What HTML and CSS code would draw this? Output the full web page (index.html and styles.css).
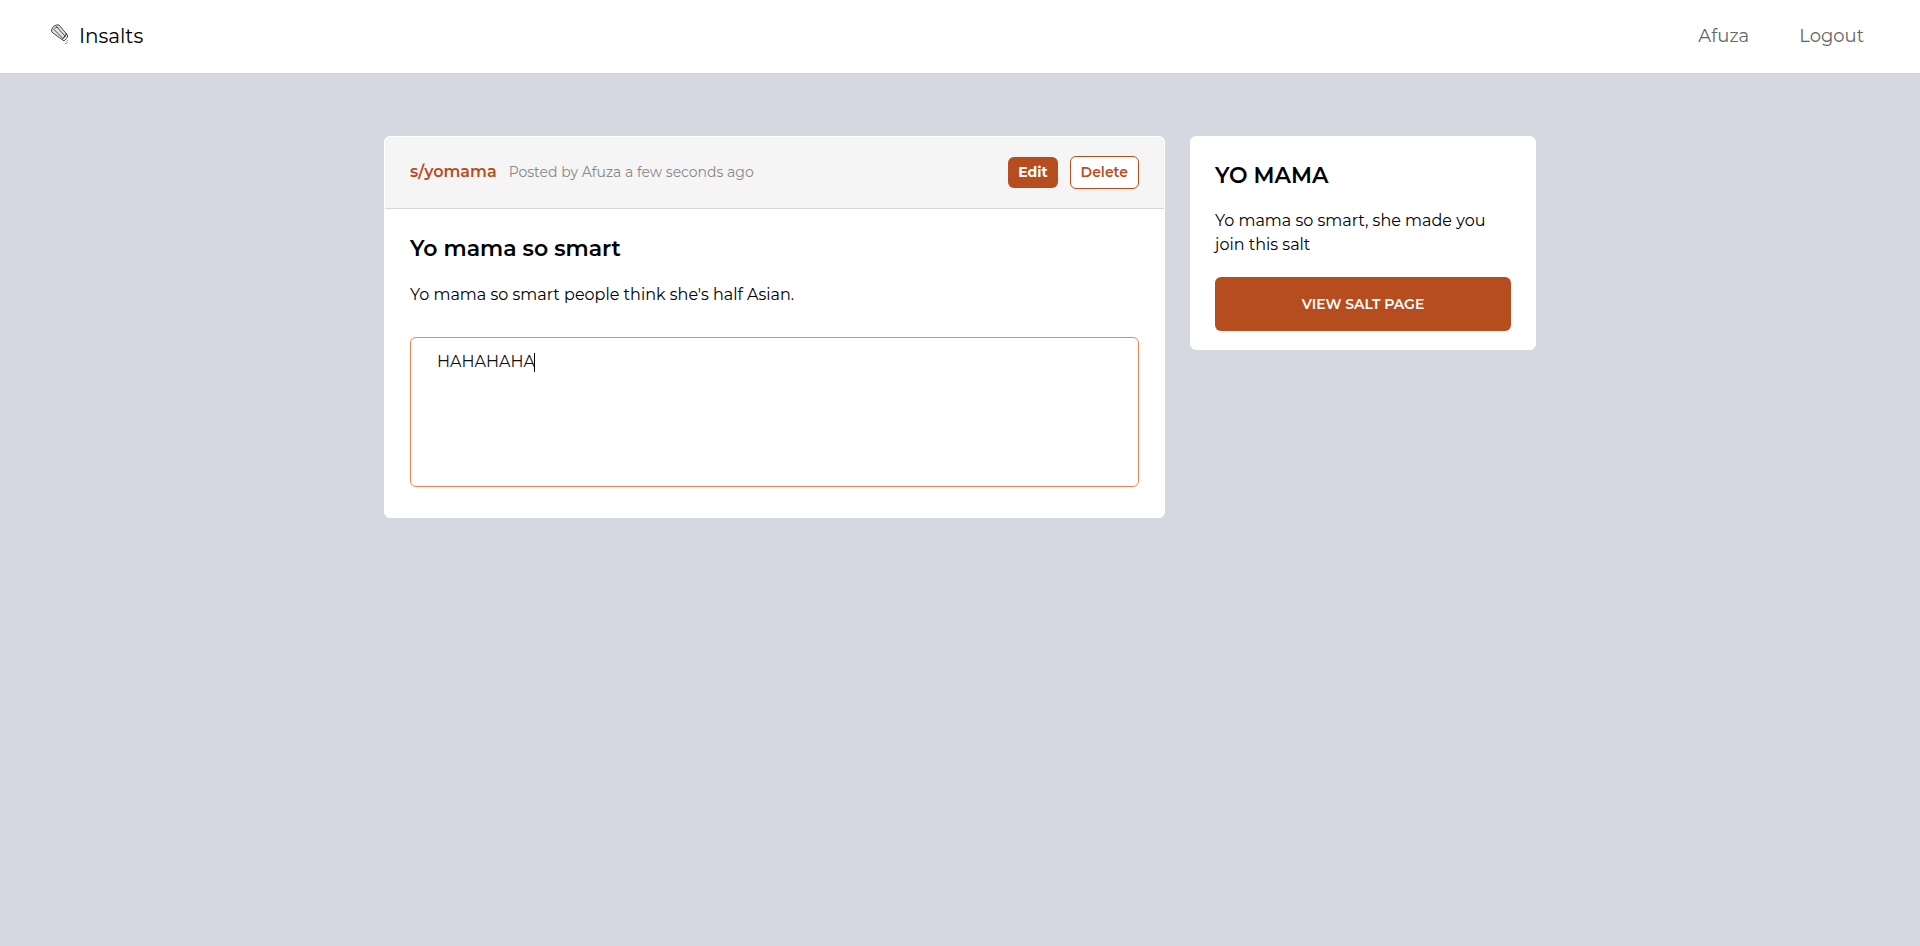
FILE: index.html
```html
<!DOCTYPE html>
<html lang="en">
<head>
<meta charset="utf-8">
<meta name="viewport" content="width=device-width, initial-scale=1">
<title>Insalts</title>
<link rel="stylesheet" href="styles.css">
</head>
<body>
<header class="navbar">
  <a class="brand" href="#">
    <svg class="brand-icon" viewBox="0 0 18 20" aria-hidden="true">
      <g fill="none" stroke="#444" stroke-width="1" stroke-linejoin="round" stroke-linecap="round">
        <path fill="#e6e6e6" d="M1 6.500Q1.500 3.500 3.500 2Q6 .4 8.500 1L16 10L11.500 15.500L2.500 9Q1 8 1 6.500Z"/>
        <path d="M3 5L11.500 13.500M6 2.500L14 11.500M4.500 4Q6 3 7.500 3.500"/>
        <path fill="#fff" d="M16 10L17.300 12Q16.500 15 13.500 16.800L11.500 15.500Q15 13.500 16 10Z"/>
      </g>
      <path d="M15 17.500h1M16.500 16.500h1M16 18.500h1M14.500 19.500h1.500" stroke="#999" stroke-width="1" fill="none"/>
    </svg>
    <span>Insalts</span>
  </a>
  <nav class="nav-links">
    <a href="#">Afuza</a>
    <a href="#">Logout</a>
  </nav>
</header>
<main class="layout">
  <article class="card post">
    <div class="post-header">
      <a class="salt-link" href="#">s/yomama</a>
      <span class="meta">Posted by Afuza a few seconds ago</span>
      <div class="actions">
        <button class="btn btn-solid" type="button">Edit</button>
        <button class="btn btn-outline" type="button">Delete</button>
      </div>
    </div>
    <div class="post-body">
      <h1 class="title">Yo mama so smart</h1>
      <p class="text">Yo mama so smart people think she's half Asian.</p>
      <div class="comment">
        <textarea class="comment-input" aria-label="Comment">HAHAHAHA</textarea>
        <span class="caret" aria-hidden="true"></span>
      </div>
    </div>
  </article>
  <aside class="card sidebar">
    <h2 class="title">YO MAMA</h2>
    <p class="text">Yo mama so smart, she made you join this salt</p>
    <button class="view-page" type="button">VIEW SALT PAGE</button>
  </aside>
</main>
</body>
</html>
```
FILE: styles.css
```css
* { box-sizing: border-box; }
body {
  margin: 0;
  min-height: 100vh;
  background: #d5d8e0;
  color: #000;
  font-family: Montserrat, Inter, sans-serif;
  font-size: 16px;
  font-weight: 400;
  line-height: 24px;
}
a { color: inherit; text-decoration: none; }
button, textarea { font-family: inherit; }
.navbar {
  display: flex;
  align-items: center;
  justify-content: space-between;
  padding: 20px 56px 21px 50px;
  background: #fff;
  line-height: 32px;
}
.brand { display: flex; align-items: flex-start; gap: 10px; font-size: 20px; line-height: 30px; }
.brand-icon { width: 19px; height: 20px; margin-top: 3px; }
.nav-links { display: flex; gap: 50px; font-size: 18px; color: #666; }
.layout {
  display: grid;
  grid-template-columns: minmax(0, 781fr) minmax(0, 346fr);
  gap: 25px;
  align-items: start;
  width: 60%;
  margin: 63px auto;
}
.card { background: #fff; border: 1px solid #fff; border-radius: 6px; overflow: hidden; }
.post-header {
  display: flex;
  align-items: center;
  gap: 12px;
  padding: 19px 25px;
  background: #f5f5f5;
  border-bottom: 1px solid #d8d8d8;
}
.salt-link { color: #b64d1e; font-size: 16px; font-weight: 600; }
.meta { color: #888; font-size: 14px; }
.salt-link, .meta { padding-bottom: 2px; }
.actions { display: flex; align-items: center; gap: 12px; margin-left: auto; }
.btn {
  padding: 4px 10px;
  border: 0;
  border-radius: 6px;
  font-size: 14px;
  line-height: 23px;
}
.btn-solid { background: #b64d1e; color: #fff; font-weight: 700; }
.btn-outline { border: 1px solid #b64d1e; background: #fff; color: #b64d1e; font-weight: 600; }
.post-body { padding: 25px 25px 30px; }
.title { margin: 0; font-size: 22px; font-weight: 600; line-height: 30px; }
.text { margin: 18px 0 0; }
.post-body .text { margin-top: 19px; }
.comment { position: relative; margin-top: 30px; }
.comment-input {
  display: block;
  width: 100%;
  height: 150px;
  padding: 12px 26px;
  border: 1px solid #e98558;
  border-radius: 6px;
  outline: 0;
  resize: none;
  color: #111;
  font-size: 16px;
  font-weight: 400;
  line-height: 24px;
}
.caret { position: absolute; top: 16px; left: 124px; width: 1px; height: 19px; background: #000; }
.sidebar { padding: 24px 24px 18px; }
.view-page {
  width: 100%;
  margin-top: 20px;
  padding: 15px;
  border: 0;
  border-radius: 6px;
  background: #b64d1e;
  color: #fff;
  font-size: 14px;
  font-weight: 600;
  line-height: 24px;
}
```
